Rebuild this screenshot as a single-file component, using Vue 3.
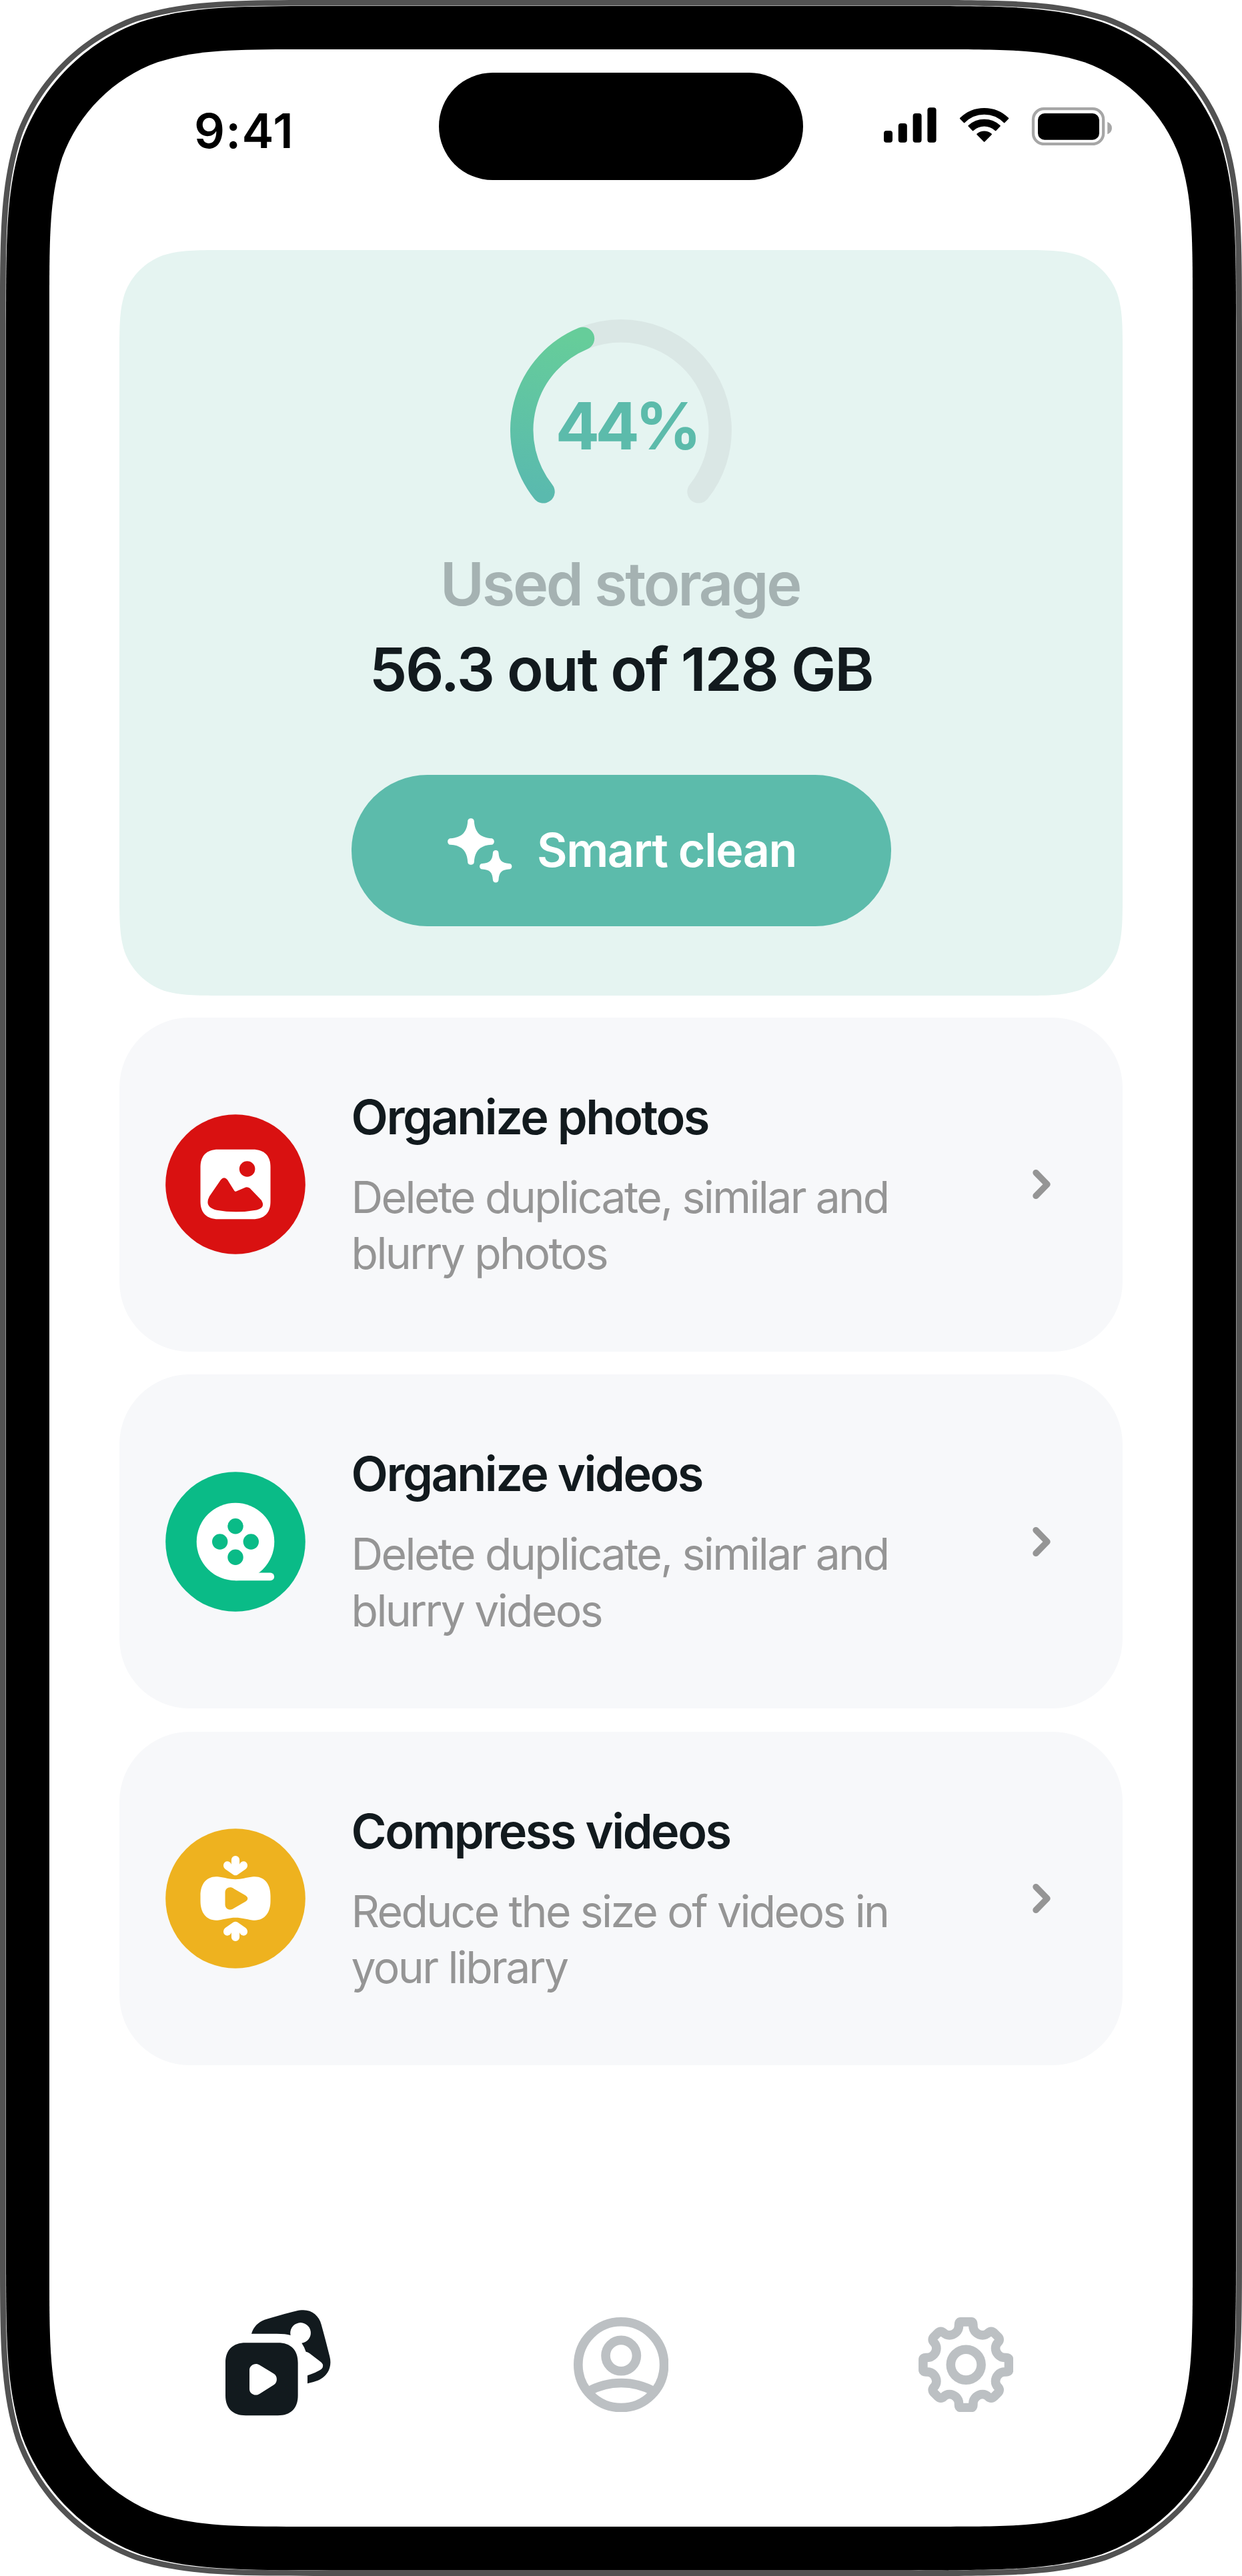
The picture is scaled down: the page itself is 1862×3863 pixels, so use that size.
<script setup>
// Continuous-curvature rounded rectangle
function squircle(x, y, w, h, r) {
  const [a, b, c, d, e, f] = [1.528665, 1.088493, 0.868407, 0.631494, 0.074911, 0.372824].map((k) => k * r)
  const g = 0.169059 * r
  const R = x + w
  const B = y + h
  return [
    `M${x + a} ${y}H${R - a}`,
    `C${R - b} ${y} ${R - c} ${y} ${R - d} ${y + e}`,
    `C${R - f} ${y + g} ${R - g} ${y + f} ${R - e} ${y + d}`,
    `C${R} ${y + c} ${R} ${y + b} ${R} ${y + a}`,
    `V${B - a}`,
    `C${R} ${B - b} ${R} ${B - c} ${R - e} ${B - d}`,
    `C${R - g} ${B - f} ${R - f} ${B - g} ${R - d} ${B - e}`,
    `C${R - c} ${B} ${R - b} ${B} ${R - a} ${B}`,
    `H${x + a}`,
    `C${x + b} ${B} ${x + c} ${B} ${x + d} ${B - e}`,
    `C${x + f} ${B - g} ${x + g} ${B - f} ${x + e} ${B - d}`,
    `C${x} ${B - c} ${x} ${B - b} ${x} ${B - a}`,
    `V${y + a}`,
    `C${x} ${y + b} ${x} ${y + c} ${x + e} ${y + d}`,
    `C${x + g} ${y + f} ${x + f} ${y + g} ${x + d} ${y + e}`,
    `C${x + c} ${y} ${x + b} ${y} ${x + a} ${y}Z`,
  ].join('')
}

const rim = squircle(0, 0, 1862, 3863, 322) + squircle(8.6, 8.6, 1844.8, 3845.8, 312)
const bezel = squircle(9, 9, 1844, 3845.4, 319)
const display = squircle(74, 74, 1714, 3715, 257)
const heroClip = { clipPath: `path("${squircle(0, 0, 1504, 1118, 104)}")` }

// One quarter of the gear outline, repeated by rotation
const quarter = [
  ['L', -8, -64.3],
  ['Q', -10.7, -64.3, -10.7, -60],
  ['L', -10.7, -58],
  ['C', -10.7, -50, -18, -44.3, -24.8, -44.3],
  ['C', -29, -44.3, -31.5, -46, -33.5, -48],
  ['Q', -37.8, -52, -42, -48],
  ['L', -48, -42],
  ['Q', -52, -37.8, -48, -33.5],
  ['C', -46, -31.5, -44.3, -29, -44.3, -24.8],
  ['C', -44.3, -18, -50, -10.7, -58, -10.7],
  ['L', -60, -10.7],
  ['Q', -64.3, -10.7, -64.3, -8],
]
const gear =
  'M8 -64.3' +
  [0, 1, 2, 3]
    .map((turn) =>
      quarter
        .map(([cmd, ...pts]) => {
          const out = []
          for (let i = 0; i < pts.length; i += 2) {
            let [px, py] = [pts[i], pts[i + 1]]
            for (let t = 0; t < turn; t++) [px, py] = [py, -px]
            out.push(px, py)
          }
          return cmd + out.join(' ')
        })
        .join('')
    )
    .join('') +
  'Z'

const items = [
  { id: 'photos', title: 'Organize photos', lines: ['Delete duplicate, similar and', 'blurry photos'], color: '#d91111' },
  { id: 'videos', title: 'Organize videos', lines: ['Delete duplicate, similar and', 'blurry videos'], color: '#0abb87' },
  { id: 'compress', title: 'Compress videos', lines: ['Reduce the size of videos in', 'your library'], color: '#eeb21f' },
]
</script>

<template>
  <div class="phone">
    <svg class="frame" viewBox="0 0 1862 3863" aria-hidden="true">
      <path :d="rim" fill="#525252" fill-rule="evenodd" />
      <path :d="bezel" fill="#000" />
      <path :d="display" fill="#fff" />
    </svg>

    <div class="screen">
      <header class="status">
        <span class="time">9:41</span>
        <div class="island"></div>
        <svg class="indicators" viewBox="1325 161 342 57.4">
          <rect x="1325" y="196" width="13" height="17.7" rx="4" />
          <rect x="1346.8" y="185" width="13" height="28.7" rx="4" />
          <rect x="1368.6" y="170" width="13" height="43.7" rx="4" />
          <rect x="1390.4" y="161.2" width="13.2" height="52.5" rx="4" />
          <g transform="translate(1475.6 213.4)" stroke="#000" stroke-width="2" stroke-linejoin="round">
            <path d="M-35.7 -35.9A51 51 0 0 1 35.7 -35.9L30 -30A42 42 0 0 0 -30 -30Z" />
            <path d="M-23.2 -24.6A34.4 34.4 0 0 1 23.2 -24.6L17 -18.2A24.6 24.6 0 0 0 -17 -18.2Z" />
            <path d="M-10.4 -12.2A16.4 16.4 0 0 1 10.4 -12.2L0 -1.6Z" />
          </g>
          <rect x="1549" y="163.2" width="105.2" height="52.8" rx="16" fill="none" stroke="#a6a6a6" stroke-width="4.3" />
          <rect x="1556" y="170" width="92" height="39.8" rx="10" />
          <path d="M1660.3 182.7Q1667 185.5 1667 192T1660.3 201.3Z" fill="#a6a6a6" />
        </svg>
      </header>

      <main class="content">
        <section class="hero" :style="heroClip">
          <div class="gauge">
            <svg viewBox="-166 -166 332 278">
              <defs>
                <linearGradient id="gauge-fill" gradientUnits="userSpaceOnUse" x1="-70" y1="-140" x2="-117" y2="95">
                  <stop offset="0" stop-color="#66cd9a" />
                  <stop offset="1" stop-color="#5abaae" />
                </linearGradient>
              </defs>
              <g fill="none" stroke-width="34.4" stroke-linecap="round">
                <path d="M-116.5 92.4A148.7 148.7 0 1 1 116.5 92.4" stroke="#dae7e5" />
                <path d="M-116.5 92.4A148.7 148.7 0 0 1 -57 -137.4" stroke="url(#gauge-fill)" />
              </g>
            </svg>
            <span class="percent">44%</span>
          </div>
          <p class="caption">Used storage</p>
          <p class="amount">56.3 out of 128 GB</p>
          <button class="clean" type="button">
            <svg class="sparkle" viewBox="-35 -35 97 97" fill="#fff">
              <path d="M-4.8 -30.5C-4.8 -36.3 4.8 -36.3 4.8 -30.5C5.8 -14 14 -5.8 30.5 -4.8C36.3 -4.8 36.3 4.8 30.5 4.8C14 5.8 5.8 14 4.8 30.5C4.8 36.3 -4.8 36.3 -4.8 30.5C-5.8 14 -14 5.8 -30.5 4.8C-36.3 4.8 -36.3 -4.8 -30.5 -4.8C-14 -5.8 -5.8 -14 -4.8 -30.5Z" />
              <path transform="translate(37.2 37.3)" d="M-4.3 -20C-4.3 -25.6 4.3 -25.6 4.3 -20C5 -9 9 -5 20 -4.3C25.6 -4.3 25.6 4.3 20 4.3C9 5 5 9 4.3 20C4.3 25.6 -4.3 25.6 -4.3 20C-5 9 -9 5 -20 4.3C-25.6 4.3 -25.6 -4.3 -20 -4.3C-9 -5 -5 -9 -4.3 -20Z" />
            </svg>
            <span>Smart clean</span>
          </button>
        </section>

        <section v-for="item in items" :key="item.id" class="card">
          <svg class="badge" viewBox="-105 -105 210 210">
            <circle r="104.8" :fill="item.color" />
            <g v-if="item.id === 'photos'">
              <path fill="#fff" d="M-26 -52.3H26C43 -52.3 52.5 -43 52.5 -26V26C52.5 43 43 52.3 26 52.3H-26C-43 52.3 -52.5 43 -52.5 26V-26C-52.5 -43 -43 -52.3 -26 -52.3Z" />
              <circle cx="17.6" cy="-23" r="11.8" :fill="item.color" />
              <path :fill="item.color" d="M-39 18L-22 -6.8Q-17 -12.6 -12 -6.8L-1.8 9.6Q-.4 11.6 1.2 10.4L13.5 5.2Q17.5 3 21.5 5.8L39 24Q45.5 35.5 32 38.4Q1.5 44 -28 38.8Q-47.5 34 -39 18Z" />
            </g>
            <g v-else-if="item.id === 'videos'">
              <circle r="58.3" fill="#fff" />
              <path fill="#fff" d="M0 46.6H52.3A5.85 5.85 0 0 1 52.3 58.3H0Z" />
              <g :fill="item.color">
                <circle cy="-23.3" r="11.7" />
                <circle cy="23.3" r="11.7" />
                <circle cx="-23.3" r="11.7" />
                <circle cx="23.3" r="11.7" />
              </g>
            </g>
            <g v-else fill="#fff">
              <path d="M-25 -32.4C-16 -31.4 -10 -28.8 0 -28.8S16 -31.4 25 -32.4C43 -34.5 52.5 -22 52.5 -4V4C52.5 22 43 34.5 25 32.4C16 31.4 10 28.8 0 28.8S-16 31.4 -25 32.4C-43 34.5 -52.5 22 -52.5 4V-4C-52.5 -22 -43 -34.5 -25 -32.4Z" />
              <path :fill="item.color" d="M-15.5 -9C-15.5 -16 -8 -19 -2.5 -14.8L13.5 -5.5Q18.3 -3 18.3 0T13.5 5.5L-2.5 14.8C-8 19 -15.5 16 -15.5 9Z" />
              <path v-for="s in [1, -1]" :key="s" :transform="`scale(1 ${s})`" d="M-6.1 -58A6.1 6.1 0 0 1 6.1 -58V-51C8.5 -58 18 -56.8 18 -49.5Q18 -46 14.5 -43.4L3 -35.6Q0 -33.8 -3 -35.6L-14.5 -43.4Q-18 -46 -18 -49.5C-18 -56.8 -8.5 -58 -6.1 -51Z" />
            </g>
          </svg>
          <div class="copy">
            <h2>{{ item.title }}</h2>
            <p v-for="line in item.lines" :key="line">{{ line }}</p>
          </div>
          <svg class="chevron" viewBox="0 0 28 46">
            <path d="M5 5.6L22 23L5 40.4" fill="none" stroke="#959595" stroke-width="9.4" stroke-linecap="round" stroke-linejoin="round" />
          </svg>
        </section>
      </main>

      <nav class="tabs">
        <svg class="media" viewBox="114 130 475 476">
          <path fill="#121a1e" d="M231 237C240 205 262 185 290 174C335 160 390 145 430 135C442 132 452 131 465 131C505 131 535 158 545 195C560 248 572 295 583 340C594 382 578 427 530 447Q506 456 483 461V425C505 417 525 409 540 400Q555 392 552 375Q549 368 540 362L492 325Q484 319 476 318Q470 298 457 279A46 46 0 1 0 407 244Q385 237 345 237Z" />
          <path fill="#121a1e" fill-rule="evenodd" d="M205 278H350C408 278 440 310 440 368V515C440 573 408 605 350 605H205C147 605 114 573 114 515V368C114 310 147 278 205 278ZM222 400V486C222 506 247 521 268 507L332 467C349 457 349 427 332 417L268 378C247 365 222 380 222 400Z" />
        </svg>
        <svg class="tab" viewBox="-71.2 -71.2 142.4 142.4">
          <g fill="none" stroke="#bcc0c3" stroke-width="13.6">
            <circle r="64.4" />
            <circle cy="-13.6" r="23.2" />
            <path d="M-50 40.4A102 102 0 0 1 50 40.4" />
          </g>
        </svg>
        <svg class="tab" viewBox="-71.2 -71.2 142.4 142.4">
          <g fill="none" stroke="#bcc0c3" stroke-width="13.6" stroke-linejoin="round">
            <path :d="gear" />
            <circle r="22.9" />
          </g>
        </svg>
      </nav>
    </div>
  </div>
</template>

<style>
body {
  background: #fff;
}
</style>

<style scoped>
.phone {
  position: relative;
  width: 1862px;
  height: 3863px;
  overflow: hidden;
  font-family: Inter, "Liberation Sans", sans-serif;
  color: #121a1e;
}
.frame {
  position: absolute;
  inset: 0;
  width: 100%;
  height: 100%;
}
.screen {
  position: relative;
  display: flex;
  flex-direction: column;
  height: 100%;
  padding: 0 179px;
  box-sizing: border-box;
}
svg {
  display: block;
}
p,
h2 {
  margin: 0;
  white-space: nowrap;
}
.status {
  display: flex;
  align-items: flex-start;
  height: 375px;
  flex: none;
}
.time {
  width: 367px;
  margin: 152px 0 0 112px;
  color: #000;
  font-size: 72px;
  font-weight: 600;
  line-height: 88px;
  letter-spacing: 1.2px;
}
.island {
  width: 545.6px;
  height: 161.8px;
  margin-top: 108.5px;
  border-radius: 81px;
  background: #000;
}
.indicators {
  width: 342px;
  height: 57.4px;
  margin: 161px 0 0 121.4px;
}
.content {
  display: flex;
  flex-direction: column;
}
.hero {
  display: flex;
  flex-direction: column;
  align-items: center;
  height: 1118px;
  margin-bottom: 33px;
  box-sizing: border-box;
  padding-top: 104px;
  background: #e5f4f1;
}
.gauge {
  display: grid;
  width: 332px;
  height: 278px;
  margin-bottom: 54.6px;
}
.gauge > * {
  grid-area: 1 / 1;
}
.gauge svg {
  width: 332px;
  height: 278px;
}
.percent {
  justify-self: center;
  margin: 100px 0 0 16px;
  color: #5cbbab;
  font-size: 98px;
  font-weight: 700;
  line-height: 120px;
  letter-spacing: -6.5px;
}
.caption,
.amount {
  font-size: 90px;
  font-weight: 600;
  line-height: 128px;
}
.caption {
  margin-right: 3px;
  color: #a5b2b2;
  letter-spacing: -3.3px;
}
.amount {
  letter-spacing: -2.3px;
}
.clean {
  display: flex;
  align-items: center;
  gap: 37px;
  width: 809px;
  height: 226.6px;
  margin-top: 94.4px;
  padding: 0 0 0 144.6px;
  box-sizing: border-box;
  border: 0;
  border-radius: 114px;
  background: #5cbbab;
  color: #fff;
  font: 600 70px/88px Inter, "Liberation Sans", sans-serif;
  letter-spacing: -1.4px;
  white-space: nowrap;
}
.sparkle {
  width: 97px;
  height: 97px;
  flex: none;
}
.card {
  display: flex;
  align-items: center;
  height: 500.6px;
  margin-bottom: 34.8px;
  padding-left: 69.3px;
  border-radius: 105px;
  background: #f7f8fa;
}
.badge {
  width: 210px;
  height: 210px;
  flex: none;
}
.copy {
  width: 1021px;
  margin-left: 68.3px;
}
.copy h2 {
  margin-bottom: 34px;
  font-size: 72px;
  font-weight: 600;
  line-height: 88px;
  letter-spacing: -2.5px;
}
.copy p {
  color: #959595;
  font-size: 66px;
  line-height: 84.3px;
  letter-spacing: -2.6px;
}
.chevron {
  width: 28px;
  height: 46px;
  flex: none;
}
.tabs {
  display: flex;
  align-items: flex-start;
  margin-top: 332px;
  padding-left: 159px;
}
.media {
  width: 158.3px;
  height: 158.7px;
}
.tab {
  width: 142.4px;
  height: 142.4px;
  margin: 10.7px 0 0 363.6px;
}
.tab + .tab {
  margin-left: 374.5px;
}
</style>
